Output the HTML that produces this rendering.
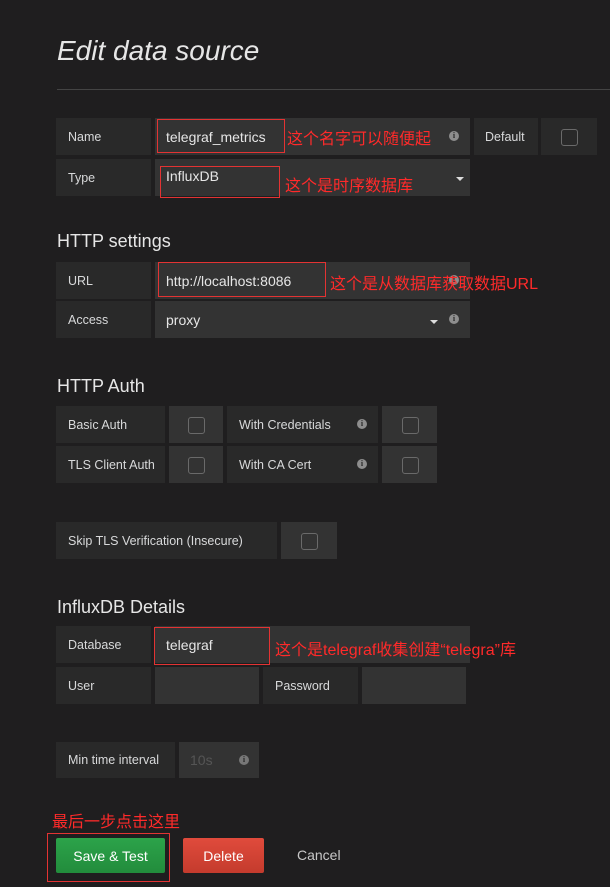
<!DOCTYPE html>
<html><head><meta charset="utf-8"><style>
body{margin:0;width:610px;height:887px;background:#1f1e1f;font-family:"Liberation Sans","Noto Sans CJK SC",sans-serif;color:#d8d9da;position:relative;overflow:hidden}
.a{position:absolute;box-sizing:border-box}
.l{background:#292929;font-size:12.5px;color:#d8d9da;padding-left:12px;display:flex;align-items:center}
.i{background:#333;font-size:14px;color:#e6e6e6;padding-left:11px;display:flex;align-items:center}
.cb::after{content:"";position:absolute;left:50%;top:50%;width:15px;height:15px;margin:-8px 0 0 -8px;border:1.5px solid #6a6a6a;border-radius:3px}
.h{font-size:18px;color:#e6e6e6}
.r{border:1px solid #e33333;}
.t{color:#ff2a2a;font-size:16px;font-family:"Liberation Sans","Noto Sans CJK SC",sans-serif;white-space:nowrap}
.info{position:absolute;width:10px;height:10px;border-radius:50%;background:#8e8e8e;color:#292929;font-size:8px;font-weight:bold;text-align:center;line-height:10px;font-family:"Liberation Serif",serif}
.car{position:absolute;width:0;height:0;border-left:4px solid transparent;border-right:4px solid transparent;border-top:4px solid #ddd}
</style></head><body>
<div class="a" style="left:57px;top:35px;font-size:28px;font-style:italic;color:#e6e6e6">Edit data source</div>
<div class="a" style="left:57px;top:89px;width:553px;height:1px;background:#444"></div>

<div class="a l" style="left:56px;top:118px;width:95px;height:37px">Name</div>
<div class="a i" style="left:155px;top:118px;width:315px;height:37px">telegraf_metrics</div>
<div class="info" style="left:449px;top:131px">i</div>
<div class="a l" style="left:474px;top:118px;width:64px;height:37px;padding-left:11px">Default</div>
<div class="a l cb" style="left:541px;top:118px;width:56px;height:37px"></div>
<div class="a r" style="left:157px;top:119px;width:128px;height:34px"></div>
<div class="a t" style="left:287px;top:125px">这个名字可以随便起</div>

<div class="a l" style="left:56px;top:159px;width:95px;height:37px">Type</div>
<div class="a i" style="left:155px;top:159px;width:315px;height:37px;align-items:flex-start;padding-top:9px">InfluxDB</div>
<div class="car" style="left:456px;top:177px"></div>
<div class="a r" style="left:160px;top:166px;width:120px;height:32px"></div>
<div class="a t" style="left:285px;top:172px">这个是时序数据库</div>

<div class="a h" style="left:57px;top:231px">HTTP settings</div>
<div class="a l" style="left:56px;top:262px;width:95px;height:37px">URL</div>
<div class="a i" style="left:155px;top:262px;width:315px;height:37px">http://localhost:8086</div>
<div class="info" style="left:449px;top:275px">i</div>
<div class="a r" style="left:158px;top:262px;width:168px;height:35px"></div>
<div class="a t" style="left:330px;top:270px">这个是从数据库获取数据URL</div>
<div class="a l" style="left:56px;top:301px;width:95px;height:37px">Access</div>
<div class="a i" style="left:155px;top:301px;width:315px;height:37px">proxy</div>
<div class="car" style="left:430px;top:320px"></div>
<div class="info" style="left:449px;top:314px">i</div>

<div class="a h" style="left:57px;top:376px">HTTP Auth</div>
<div class="a l" style="left:56px;top:406px;width:109px;height:37px">Basic Auth</div>
<div class="a l cb" style="left:169px;top:406px;width:54px;height:37px;background:#333"></div>
<div class="a l" style="left:227px;top:406px;width:151px;height:37px">With Credentials</div>
<div class="info" style="left:357px;top:419px">i</div>
<div class="a l cb" style="left:382px;top:406px;width:55px;height:37px;background:#333"></div>
<div class="a l" style="left:56px;top:446px;width:109px;height:37px">TLS Client Auth</div>
<div class="a l cb" style="left:169px;top:446px;width:54px;height:37px;background:#333"></div>
<div class="a l" style="left:227px;top:446px;width:151px;height:37px">With CA Cert</div>
<div class="info" style="left:357px;top:459px">i</div>
<div class="a l cb" style="left:382px;top:446px;width:55px;height:37px;background:#333"></div>

<div class="a l" style="left:56px;top:522px;width:221px;height:37px">Skip TLS Verification (Insecure)</div>
<div class="a l cb" style="left:281px;top:522px;width:56px;height:37px;background:#333"></div>

<div class="a h" style="left:57px;top:597px">InfluxDB Details</div>
<div class="a l" style="left:56px;top:626px;width:95px;height:37px">Database</div>
<div class="a i" style="left:155px;top:626px;width:315px;height:37px">telegraf</div>
<div class="a r" style="left:154px;top:627px;width:116px;height:38px"></div>
<div class="a t" style="left:275px;top:636px">这个是telegraf收集创建“telegra”库</div>
<div class="a l" style="left:56px;top:667px;width:95px;height:37px">User</div>
<div class="a i" style="left:155px;top:667px;width:104px;height:37px"></div>
<div class="a l" style="left:263px;top:667px;width:95px;height:37px">Password</div>
<div class="a i" style="left:362px;top:667px;width:104px;height:37px"></div>

<div class="a l" style="left:56px;top:742px;width:119px;height:36px">Min time interval</div>
<div class="a i" style="left:179px;top:742px;width:80px;height:36px;color:#555">10s</div>
<div class="info" style="left:239px;top:755px;background:#777">i</div>

<div class="a t" style="left:52px;top:808px">最后一步点击这里</div>
<div class="a r" style="left:47px;top:833px;width:123px;height:49px"></div>
<div class="a" style="left:56px;top:838px;width:109px;height:35px;background:linear-gradient(#2ca34a,#228c3c);color:#fff;font-size:14px;display:flex;align-items:center;justify-content:center;border-radius:2px">Save &amp; Test</div>
<div class="a" style="left:183px;top:838px;width:81px;height:35px;background:linear-gradient(#e04b3c,#c43b2d);color:#fff;font-size:14px;display:flex;align-items:center;justify-content:center;border-radius:2px">Delete</div>
<div class="a" style="left:297px;top:847px;font-size:14px;color:#c8c8c8">Cancel</div>
</body></html>
